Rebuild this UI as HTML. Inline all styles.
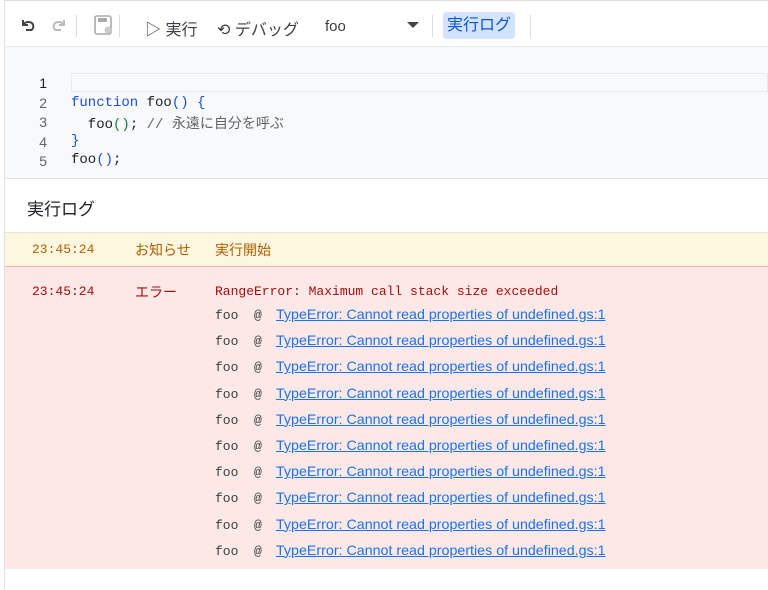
<!DOCTYPE html>
<html><head><meta charset="utf-8"><style>
*{margin:0;padding:0;box-sizing:border-box}
body{width:768px;height:590px;background:#fff;font-family:"Liberation Sans","Noto Sans CJK JP",sans-serif;position:relative;overflow:hidden}
.abs{position:absolute}
.mono{font-family:"Liberation Mono","Noto Sans CJK JP",monospace}
.tb{top:0;left:5px;right:0;height:47px;border-top:1px solid #e0e0e0;border-bottom:1px solid #e8eaed}
.sep{position:absolute;top:14px;width:1px;height:22px;background:#dadce0}
.ed{top:47px;left:5px;right:0;height:131px;background:#f8f9fa}
.ln{position:absolute;left:28px;width:14px;text-align:right;font-size:14px;color:#5f6368}
.code{position:absolute;left:71px;font-size:14px;color:#202124;white-space:pre}
.kw{color:#1a4fd6}
.row{position:absolute;font-size:13px}
.lk{color:#1a73e8;text-decoration:underline;font-size:14.25px}
</style></head><body>
<div class="abs" style="left:4px;top:0;width:1px;height:590px;background:#e0e0e0"></div>
<div class="abs tb">
 <svg class="abs" style="left:14px;top:15px" width="20" height="20" viewBox="0 0 20 20"><path d="M4 4v5h5M4.5 8.5C6 6 9 5.5 12 6.5 15 8 15 12 12.5 14H7" fill="none" stroke="#444" stroke-width="2"/></svg>
 <svg class="abs" style="left:43px;top:15px" width="20" height="20" viewBox="0 0 20 20"><path d="M16 4v5h-5M15.5 8.5C14 6 11 5.5 8 6.5 5 8 5 12 7.5 14H13" fill="none" stroke="#bbb" stroke-width="2"/></svg>
 <div class="sep" style="left:71px"></div>
 <svg class="abs" style="left:88px;top:13px" width="22" height="22" viewBox="0 0 22 22"><rect x="2" y="2" width="16" height="18" rx="2" fill="none" stroke="#aaa" stroke-width="1.6"/><rect x="5" y="4" width="9" height="4" fill="#aaa"/><circle cx="15" cy="16" r="3.5" fill="#ccc"/></svg>
 <div class="sep" style="left:114px"></div>
 <div class="abs" style="left:140px;top:15px;font-size:16px;color:#3c4043">▷ 実行</div>
 <div class="abs" style="left:212px;top:15px;font-size:16px;color:#3c4043">⟲ デバッグ</div>
 <div class="abs" style="left:320px;top:17px;font-size:15px;color:#3c4043">foo</div>
 <div class="abs" style="left:402px;top:21px;width:0;height:0;border-left:6px solid transparent;border-right:6px solid transparent;border-top:6px solid #444"></div>
 <div class="sep" style="left:427px"></div>
 <div class="abs" style="left:438px;top:11px;width:72px;height:27px;background:#d3e3fd;border-radius:4px;color:#0b57d0;font-size:16px;text-align:center;line-height:28px">実行ログ</div>
 <div class="sep" style="left:525px"></div>
</div>
<div class="abs ed">
 <div class="abs" style="left:66px;top:26px;right:0;height:19px;border:1px solid #e8eaed"></div>
 <div class="ln" style="top:28px;color:#202124">1</div>
 <div class="ln" style="top:48px">2</div><div class="ln" style="top:67px">3</div><div class="ln" style="top:87px">4</div><div class="ln" style="top:106px">5</div>
 <div class="code mono" style="top:48px;left:66px"><span class="kw">function</span> foo<span class="kw">()</span> <span class="kw">{</span></div>
 <div class="code mono" style="top:66px;left:66px">  foo<span style="color:#188038">()</span>; <span style="color:#5f6368">// 永遠に自分を呼ぶ</span></div>
 <div class="code mono" style="top:86px;left:66px"><span class="kw">}</span></div>
 <div class="code mono" style="top:105px;left:66px">foo<span class="kw">()</span>;</div>
</div>
<div class="abs" style="left:5px;right:0;top:178px;height:1px;background:#e0e0e0"></div>
<div class="abs" style="left:27px;top:195px;font-size:17px;color:#202124">実行ログ</div>
<div class="abs" style="left:5px;right:0;top:232px;height:35px;background:#fef7e0;border-top:1px solid #e8e4d8;border-bottom:1px solid #f3b8a8"></div>
<div class="row mono" style="left:32px;top:242px;color:#b06000">23:45:24</div>
<div class="row" style="left:135px;top:240px;color:#b06000;font-size:14px">お知らせ</div>
<div class="row" style="left:215px;top:240px;color:#b06000;font-size:14px">実行開始</div>
<div class="abs" style="left:5px;right:0;top:267px;height:302px;background:#fce8e6"></div>
<div class="row mono" style="left:32px;top:284px;color:#a50e0e">23:45:24</div>
<div class="row" style="left:135px;top:282px;color:#a50e0e;font-size:14px">エラー</div>
<div class="row mono" style="left:215px;top:284px;color:#a50e0e">RangeError: Maximum call stack size exceeded</div>
<div id="st"></div>
<script>
var h='';for(var i=0;i<10;i++){var y=307+i*26.2;h+='<div class="row mono" style="left:215px;top:'+(y+1)+'px;color:#3c4043">foo&nbsp;&nbsp;@</div><div class="row lk" style="left:276px;top:'+y+'px">TypeError: Cannot read properties of undefined.gs:1</div>';}
document.getElementById('st').innerHTML=h;
</script>
</body></html>
